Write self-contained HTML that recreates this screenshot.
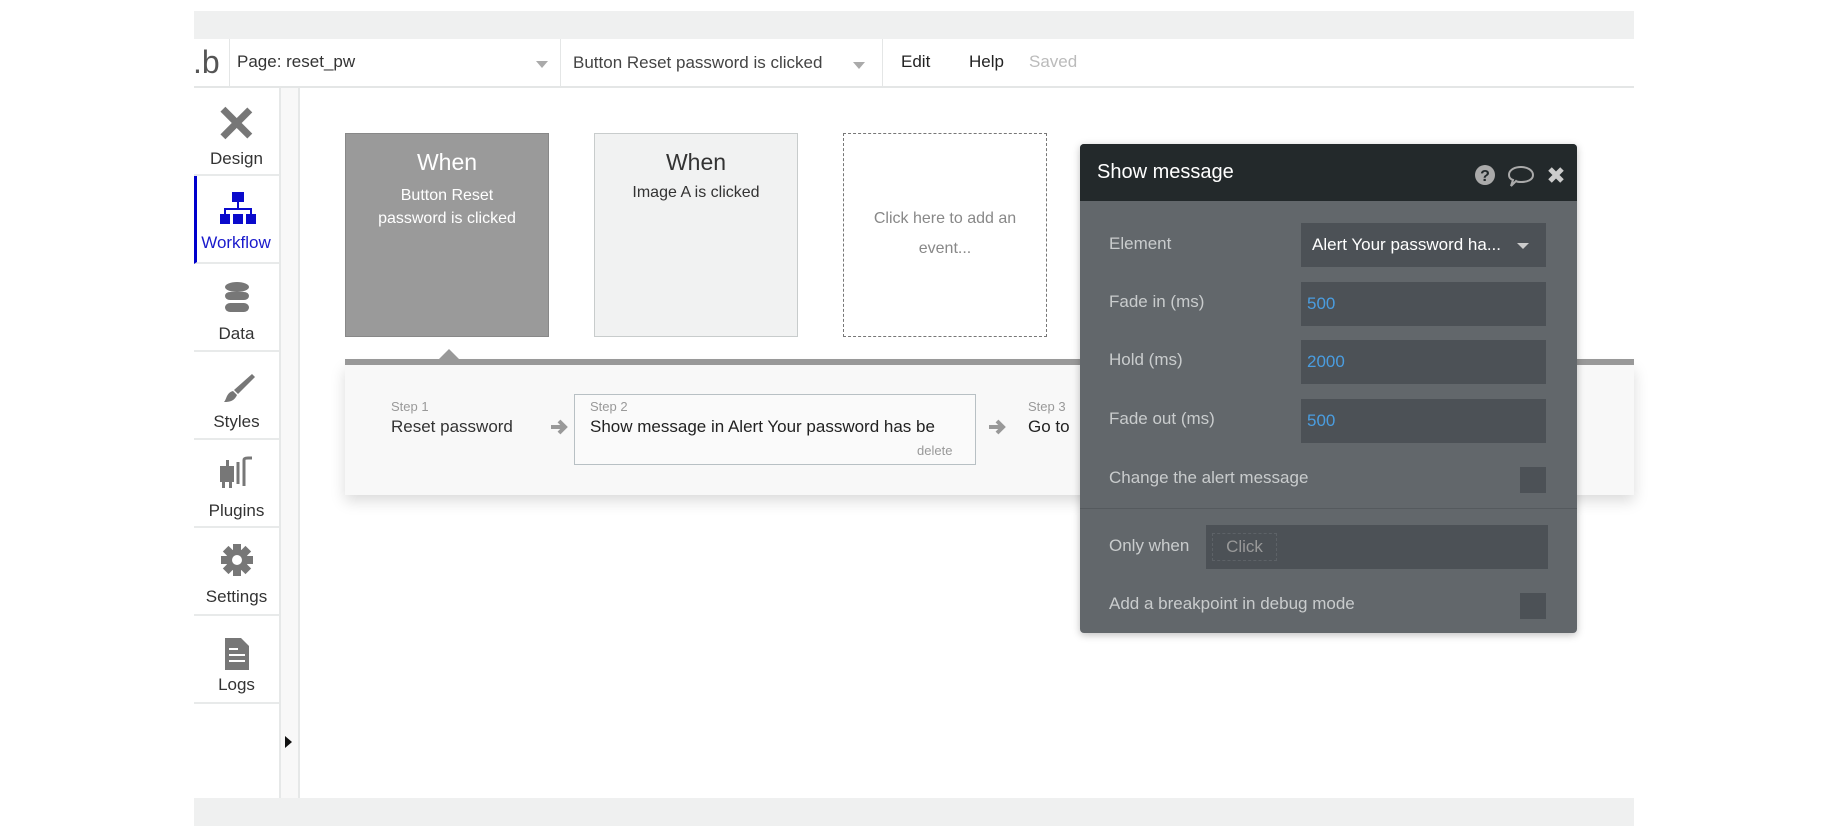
<!DOCTYPE html>
<html><head><meta charset="utf-8"><style>
*{margin:0;padding:0;box-sizing:border-box}
body{width:1830px;height:836px;background:#fff;position:relative;overflow:hidden;font-family:"Liberation Sans",sans-serif;color:#333}
.a{position:absolute}
.side .it{position:absolute;left:194px;width:85px;height:88px;border-bottom:2px solid #e8eaea;text-align:center}
.side .lb{position:absolute;left:0;right:0;font-size:17px;color:#333}
.lbl{position:absolute;left:1109px;font-size:17px;color:#c9cccd}
.inp{position:absolute;left:1301px;width:245px;height:44px;background:#4c5156;color:#4a9de0;font-size:17px;padding-left:6px;line-height:44px}
</style></head><body>
<!-- top/bottom bands -->
<div class="a" style="left:194px;top:11px;width:1440px;height:28px;background:#eff0f0"></div>
<div class="a" style="left:194px;top:798px;width:1440px;height:28px;background:#eff0f0"></div>
<!-- header -->
<div class="a" style="left:194px;top:39px;width:1440px;height:49px;border-bottom:2px solid #e4e6e6;background:#fff"></div>
<div class="a" style="left:193px;top:44px;font-size:32px;color:#555;font-weight:normal;line-height:36px">.b</div>
<div class="a" style="left:229px;top:39px;width:1px;height:48px;background:#e4e6e6"></div>
<div class="a" style="left:237px;top:52px;font-size:17px;color:#333">Page: reset_pw</div>
<div class="a" style="left:536px;top:61px;border:6px solid transparent;border-top:7px solid #aaa"></div>
<div class="a" style="left:560px;top:39px;width:1px;height:48px;background:#e4e6e6"></div>
<div class="a" style="left:573px;top:53px;font-size:17px;color:#444">Button Reset password is clicked</div>
<div class="a" style="left:853px;top:62px;border:6px solid transparent;border-top:7px solid #aaa"></div>
<div class="a" style="left:882px;top:39px;width:1px;height:48px;background:#e4e6e6"></div>
<div class="a" style="left:901px;top:52px;font-size:17px;color:#222">Edit</div>
<div class="a" style="left:969px;top:52px;font-size:17px;color:#222">Help</div>
<div class="a" style="left:1029px;top:52px;font-size:17px;color:#bbb">Saved</div>
<!-- sidebar -->
<div class="a" style="left:279px;top:88px;width:21px;height:710px;background:#f8f8f8;border-left:2px solid #e6e8e8;border-right:2px solid #e6e8e8"></div>
<div class="a" style="left:285px;top:736px;border:6px solid transparent;border-left:7px solid #111;border-right:0"></div>
<div class="side">
<div class="it" style="top:88px"><svg class="a" style="left:25px;top:18px" width="34" height="34" viewBox="0 0 34 34"><g fill="#777"><rect x="14" y="-2" width="7" height="38" transform="rotate(45 17 17)"/><rect x="14" y="-2" width="7" height="38" transform="rotate(-45 17 17)"/></g></svg><div class="lb" style="top:61px">Design</div></div>
<div class="it" style="top:176px;border-left:3px solid #0000cc"><svg class="a" style="left:22px;top:16px" width="38" height="34" viewBox="0 0 38 34"><g fill="#0a0acc"><rect x="13" y="0" width="12" height="10"/><rect x="1" y="22" width="10" height="10"/><rect x="14" y="22" width="10" height="10"/><rect x="27" y="22" width="10" height="10"/><rect x="18" y="10" width="2" height="7"/><rect x="5" y="16" width="28" height="2"/><rect x="5" y="16" width="2" height="6"/><rect x="31" y="16" width="2" height="6"/></g></svg><div class="lb" style="top:57px;color:#1a1acc;left:-4px">Workflow</div></div>
<div class="it" style="top:264px"><svg class="a" style="left:30px;top:18px" width="26" height="32" viewBox="0 0 26 32"><g fill="#777"><ellipse cx="13" cy="5" rx="12" ry="5"/><rect x="1" y="10" width="24" height="8" rx="5"/><rect x="1" y="21" width="24" height="9" rx="5"/></g></svg><div class="lb" style="top:60px">Data</div></div>
<div class="it" style="top:352px"><svg class="a" style="left:28px;top:20px" width="34" height="32" viewBox="0 0 34 32"><path d="M30 2 L33 5 L16 22 L12 18 Z" fill="#777"/><path d="M11 19 L15 23 C12 30 6 30 2 30 C5 27 4 21 11 19Z" fill="#777"/></svg><div class="lb" style="top:60px">Styles</div></div>
<div class="it" style="top:440px"><svg class="a" style="left:24px;top:16px" width="38" height="34" viewBox="0 0 38 34"><g fill="#777"><rect x="2" y="10" width="14" height="16"/><rect x="4" y="26" width="3" height="6"/><rect x="11" y="26" width="3" height="6"/><rect x="8" y="4" width="3" height="6"/></g><path d="M20 28 V6 M26 30 V4 Q26 2 30 2 H34" stroke="#777" stroke-width="3" fill="none"/></svg><div class="lb" style="top:61px">Plugins</div></div>
<div class="it" style="top:528px"><svg class="a" style="left:26px;top:15px" width="34" height="34" viewBox="0 0 34 34"><g fill="#777"><circle cx="17" cy="17" r="11"/><rect x="13" y="1" width="8" height="32"/><rect x="13" y="1" width="8" height="32" transform="rotate(45 17 17)"/><rect x="13" y="1" width="8" height="32" transform="rotate(90 17 17)"/><rect x="13" y="1" width="8" height="32" transform="rotate(135 17 17)"/></g><circle cx="17" cy="17" r="5" fill="#fff"/></svg><div class="lb" style="top:59px">Settings</div></div>
<div class="it" style="top:616px"><svg class="a" style="left:30px;top:21px" width="26" height="34" viewBox="0 0 26 34"><path d="M1 1 H17 L25 9 V33 H1 Z" fill="#777"/><g stroke="#fff" stroke-width="2"><path d="M5 12 H14 M5 18 H21 M5 24 H21"/></g></svg><div class="lb" style="top:59px">Logs</div></div>
</div>
<!-- event cards -->
<div class="a" style="left:345px;top:133px;width:204px;height:204px;background:#9a9a9a;border:1px solid #888;text-align:center;color:#fff"><div style="font-size:23px;margin-top:15px">When</div><div style="font-size:16px;margin-top:8px;line-height:23px">Button Reset<br>password is clicked</div></div>
<div class="a" style="left:594px;top:133px;width:204px;height:204px;background:#f1f2f2;border:1px solid #c8cccc;text-align:center;color:#333"><div style="font-size:23px;margin-top:15px">When</div><div style="font-size:16px;margin-top:8px">Image A is clicked</div></div>
<div class="a" style="left:843px;top:133px;width:204px;height:204px;border:1.5px dashed #777;text-align:center;color:#888;font-size:16px;line-height:30px;padding-top:70px">Click here to add an<br>event...</div>
<!-- steps -->
<div class="a" style="left:345px;top:364px;width:1289px;height:131px;background:#f8f8f8;box-shadow:0 6px 14px rgba(0,0,0,0.15)"></div>
<div class="a" style="left:345px;top:359px;width:1289px;height:6px;background:#999"></div>
<div class="a" style="left:439px;top:349px;border:10px solid transparent;border-bottom:10px solid #999;border-top:0"></div>
<div class="a" style="left:391px;top:399px;font-size:13px;color:#999">Step 1</div>
<div class="a" style="left:391px;top:417px;font-size:17px;color:#333">Reset password</div>
<svg class="a" style="left:549px;top:417px" width="20" height="20" viewBox="0 0 20 20"><path d="M2 10 H16 M10 4 L16 10 L10 16" stroke="#999" stroke-width="4" fill="none"/></svg>
<div class="a" style="left:574px;top:394px;width:402px;height:71px;border:1.5px solid #b8c0c4;background:#fafafa"></div>
<div class="a" style="left:590px;top:399px;font-size:13px;color:#999">Step 2</div>
<div class="a" style="left:590px;top:417px;font-size:17px;color:#222">Show message in Alert Your password has be</div>
<div class="a" style="left:917px;top:443px;font-size:13px;color:#999">delete</div>
<svg class="a" style="left:987px;top:417px" width="20" height="20" viewBox="0 0 20 20"><path d="M2 10 H16 M10 4 L16 10 L10 16" stroke="#999" stroke-width="4" fill="none"/></svg>
<div class="a" style="left:1028px;top:399px;font-size:13px;color:#999">Step 3</div>
<div class="a" style="left:1028px;top:417px;font-size:17px;color:#222">Go to</div>
<!-- panel -->
<div class="a" style="left:1080px;top:144px;width:497px;height:489px;background:#62676b;border-radius:4px;box-shadow:0 2px 8px rgba(0,0,0,0.25);overflow:hidden">
<div style="height:57px;background:#23292b;color:#fff;font-size:20px;padding:17px 0 0 17px">Show message</div>
</div>
<svg class="a" style="left:1474px;top:163px" width="100" height="26" viewBox="0 0 100 26"><circle cx="11" cy="12" r="10" fill="#aaa"/><text x="11" y="18" text-anchor="middle" font-family="Liberation Sans" font-weight="bold" font-size="16" fill="#23292b">?</text><path d="M35 12 C35 6 42 4 47 4 C53 4 59 7 59 12 C59 17 53 19 47 19 C45 19 43 19 42 18 L37 23 L39 17 C36 16 35 14 35 12Z" stroke="#aaa" stroke-width="2" fill="none"/><path d="M76 6 L88 18 M88 6 L76 18" stroke="#ccc" stroke-width="5"/></svg>
<div class="lbl" style="top:234px">Element</div>
<div class="inp" style="top:223px;color:#fff;padding-left:11px">Alert Your password ha...</div>
<div class="a" style="left:1517px;top:243px;border:6px solid transparent;border-top:6px solid #ccc"></div>
<div class="lbl" style="top:292px">Fade in (ms)</div><div class="inp" style="top:282px">500</div>
<div class="lbl" style="top:350px">Hold (ms)</div><div class="inp" style="top:340px">2000</div>
<div class="lbl" style="top:409px">Fade out (ms)</div><div class="inp" style="top:399px">500</div>
<div class="lbl" style="top:468px">Change the alert message</div>
<div class="a" style="left:1520px;top:467px;width:26px;height:26px;background:#4c5156"></div>
<div class="a" style="left:1080px;top:508px;width:497px;height:1px;background:#555a5e"></div>
<div class="lbl" style="top:536px">Only when</div>
<div class="a" style="left:1206px;top:525px;width:342px;height:44px;background:#4c5156"></div>
<div class="a" style="left:1212px;top:533px;width:65px;height:28px;border:1px dashed #5d6267;color:#999;font-size:17px;text-align:center;line-height:26px">Click</div>
<div class="lbl" style="top:594px">Add a breakpoint in debug mode</div>
<div class="a" style="left:1520px;top:593px;width:26px;height:26px;background:#4c5156"></div>
</body></html>
